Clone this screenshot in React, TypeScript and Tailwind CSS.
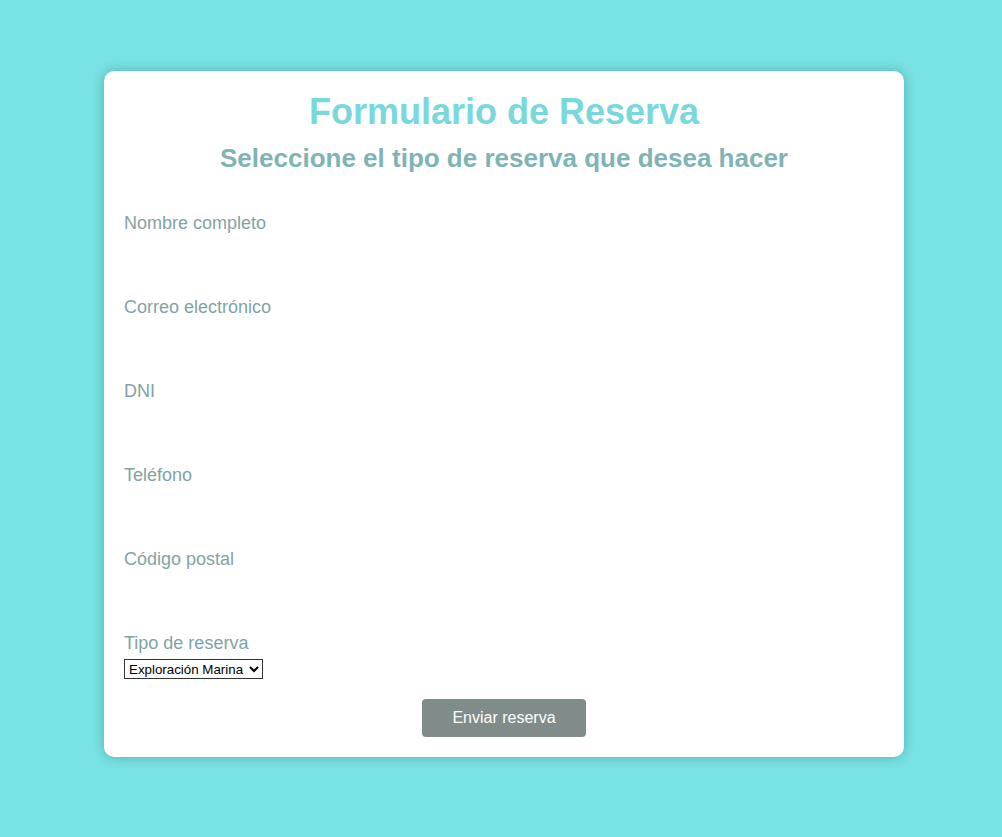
import { useState } from "react";

const FIELDS = [
  { id: "nombre", label: "Nombre completo", type: "text" },
  { id: "correo", label: "Correo electrónico", type: "email" },
  { id: "dni", label: "DNI", type: "text" },
  { id: "telefono", label: "Teléfono", type: "tel" },
  { id: "cp", label: "Código postal", type: "text" },
];

const TIPOS = ["Exploración Marina", "Buceo", "Paseo en barco"];

export default function App() {
  const [tipo, setTipo] = useState(TIPOS[0]);

  return (
    <div className="min-h-[837px] bg-[#79e2e4] pt-[71px] pb-[80px] font-['Liberation_Sans',Arial,sans-serif]">
      <form
        className="ml-[104px] w-[800px] rounded-[10px] bg-white p-5 shadow-[0_0_12px_rgba(0,60,60,0.3)]"
        onSubmit={(e) => e.preventDefault()}
      >
        <h1 className="text-center text-[36px] leading-[41px] font-bold text-[#79d8db]">
          Formulario de Reserva
        </h1>
        <h2 className="mt-[11px] mb-[40px] text-center text-[26px] leading-[30px] font-bold text-[#7fb4b5]">
          Seleccione el tipo de reserva que desea hacer
        </h2>

        {FIELDS.map((f) => (
          <div key={f.id}>
            <label htmlFor={f.id} className="block text-[18px] leading-[21px] text-[#82a3a5]">
              {f.label}
            </label>
            <input
              id={f.id}
              type={f.type}
              className="mt-[5px] mb-5 block h-[38px] w-full border-0 bg-transparent outline-none"
            />
          </div>
        ))}

        <label htmlFor="tipo" className="block text-[18px] leading-[21px] text-[#82a3a5]">
          Tipo de reserva
        </label>
        <select
          id="tipo"
          value={tipo}
          onChange={(e) => setTipo(e.target.value)}
          className="mt-[5px] block h-[20px] w-[139px] border border-[#333] bg-white text-[13.33px] text-black"
        >
          {TIPOS.map((t) => (
            <option key={t}>{t}</option>
          ))}
        </select>

        <div className="mt-5 flex justify-center">
          <button
            type="submit"
            className="h-[38px] w-[164px] rounded-[4px] bg-[#7f8c8a] text-[16px] text-white"
          >
            Enviar reserva
          </button>
        </div>
      </form>
    </div>
  );
}
